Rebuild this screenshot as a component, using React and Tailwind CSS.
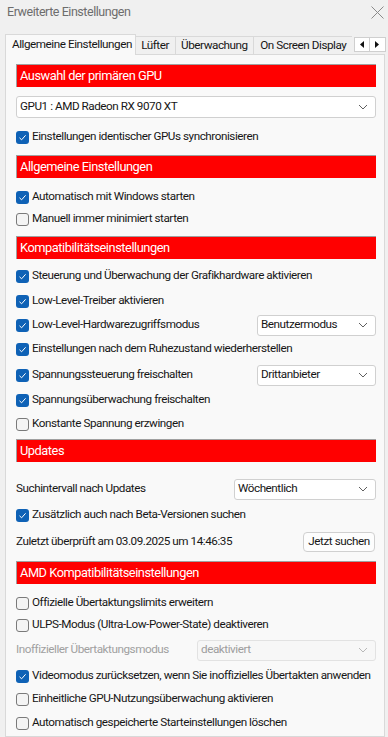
import React from "react";

const Check = ({ checked }) =>
  checked ? (
    <span className="w-[13px] h-[13px] rounded-[3px] bg-[#0f62b6] flex items-center justify-center shrink-0">
      <svg width="9" height="9" viewBox="0 0 9 9">
        <path d="M1.5 4.8 L3.6 6.8 L7.6 2.3" fill="none" stroke="white" strokeWidth="1" />
      </svg>
    </span>
  ) : (
    <span className="w-[13px] h-[13px] rounded-[3px] border border-[#7a7a7a] bg-[#f4f4f4] shrink-0" />
  );

const Chevron = ({ color = "#5f5f5f" }) => (
  <svg width="10" height="6" viewBox="0 0 10 6">
    <path d="M1 1 L5 5 L9 1" fill="none" stroke={color} strokeWidth="1" />
  </svg>
);

const Header = ({ title, className }) => (
  <div className={"h-[23px] bg-[#ff0000] border-t border-l border-[#a0a0a0] flex items-center pl-[3px] text-white text-[12.8px] " + className}>
    {title}
  </div>
);

const Row = ({ checked, label, className, children }) => (
  <div className={"h-[22px] flex items-center " + className}>
    <Check checked={checked} />
    <span className="ml-[3px] flex-1 whitespace-nowrap">{label}</span>
    {children}
  </div>
);

const Select = ({ value, className, disabled }) => (
  <div
    className={
      "h-[21px] rounded-[3px] border flex items-center justify-between pl-[3px] pr-[7px] " +
      (disabled ? "border-[#e2e2e2] bg-[#f7f7f7] text-[#9d9d9d] " : "border-[#d0d0d0] bg-white ") +
      className
    }
  >
    <span>{value}</span>
    <Chevron color={disabled ? "#b8b8b8" : "#5f5f5f"} />
  </div>
);

export default function App() {
  return (
    <div
      className="w-[388px] h-[737px] bg-[#f0f0f0] text-[11.7px] tracking-[-0.45px] text-[#161616] overflow-hidden flex flex-col"
      style={{ fontFamily: "Roboto, 'Liberation Sans', sans-serif" }}
    >
      {/* title bar */}
      <div className="h-[25px] flex items-center justify-between pl-[7px] pr-[3px]">
        <span className="text-[12.5px] text-[#6d6d6d]">Erweiterte Einstellungen</span>
        <svg width="13" height="13" viewBox="0 0 13 13" className="mr-[1px]">
          <path d="M0.5 0.5 L12.5 12.5 M12.5 0.5 L0.5 12.5" stroke="#8a8a8a" strokeWidth="1" />
        </svg>
      </div>

      {/* tabs */}
      <div className="h-[29px] flex items-end pl-[5px] pr-[2px] whitespace-nowrap">
        <div className="h-[21px] w-[131px] bg-[#f9f9f9] border-t border-l border-r border-[#d9d9d9] flex items-center pl-[6px] relative top-[1px] z-10">
          Allgemeine Einstellungen
        </div>
        <div className="h-[18px] w-[40px] border-t border-r border-[#d9d9d9] flex items-center justify-center">Lüfter</div>
        <div className="h-[18px] w-[79px] border-t border-r border-[#d9d9d9] flex items-center justify-center">Überwachung</div>
        <div className="h-[18px] w-[98px] border-t border-[#d9d9d9] flex items-center pl-[6px] overflow-hidden">
          On Screen Display
        </div>
        <div className="flex self-start mt-[12px] ml-[2px] border border-[#cfcfcf] bg-white h-[15px]">
          <div className="w-[15px] flex items-center justify-center border-r border-[#cfcfcf]">
            <svg width="4" height="7" viewBox="0 0 4 7"><path d="M4 0 L0 3.5 L4 7 Z" fill="#111" /></svg>
          </div>
          <div className="w-[15px] flex items-center justify-center">
            <svg width="4" height="7" viewBox="0 0 4 7"><path d="M0 0 L4 3.5 L0 7 Z" fill="#111" /></svg>
          </div>
        </div>
      </div>

      {/* panel */}
      <div className="flex-1 ml-[5px] mr-[3px] border border-[#d9d9d9] bg-[#f9f9f9] pl-[10px] pr-[8px] pt-[9px] flex flex-col">
        <Header title="Auswahl der primären GPU" className="" />
        <Select value="GPU1 : AMD Radeon RX 9070 XT" className="mt-[9px] h-[22px]" />
        <Row checked label="Einstellungen identischer GPUs synchronisieren" className="mt-[8px]" />

        <Header title="Allgemeine Einstellungen" className="mt-[7px]" />
        <Row checked label="Automatisch mit Windows starten" className="mt-[8px]" />
        <Row label="Manuell immer minimiert starten" className="" />

        <Header title="Kompatibilitätseinstellungen" className="mt-[6px]" />
        <Row checked label="Steuerung und Überwachung der Grafikhardware aktivieren" className="mt-[6px]" />
        <Row checked label="Low-Level-Treiber aktivieren" className="mt-[3px]" />
        <Row checked label="Low-Level-Hardwarezugriffsmodus" className="mt-[2px]">
          <Select value="Benutzermodus" className="w-[119px]" />
        </Row>
        <Row checked label="Einstellungen nach dem Ruhezustand wiederherstellen" className="mt-[2px]" />
        <Row checked label="Spannungssteuerung freischalten" className="mt-[4px]">
          <Select value="Drittanbieter" className="w-[119px]" />
        </Row>
        <Row checked label="Spannungsüberwachung freischalten" className="mt-[3px]" />
        <Row label="Konstante Spannung erzwingen" className="mt-[2px]" />

        <Header title="Updates" className="mt-[4px]" />
        <div className="h-[22px] flex items-center justify-between mt-[16px]">
          <span>Suchintervall nach Updates</span>
          <Select value="Wöchentlich" className="w-[142px]" />
        </div>
        <Row checked label="Zusätzlich auch nach Beta-Versionen suchen" className="mt-[4px]" />
        <div className="h-[22px] flex items-center justify-between mt-[5px]">
          <span>Zuletzt überprüft am 03.09.2025 um 14:46:35</span>
          <div className="h-[20px] w-[72px] mr-[1px] bg-[#fdfdfd] border border-[#d0d0d0] rounded-[4px] flex items-center justify-center">
            Jetzt suchen
          </div>
        </div>

        <Header title="AMD Kompatibilitätseinstellungen" className="mt-[8px]" />
        <Row label="Offizielle Übertaktungslimits erweitern" className="mt-[8px]" />
        <Row label="ULPS-Modus (Ultra-Low-Power-State) deaktiveren" className="" />
        <div className="h-[22px] flex items-center justify-between mt-[3px]">
          <span className="text-[#a0a0a0]">Inoffizieller Übertaktungsmodus</span>
          <Select value="deaktiviert" disabled className="w-[179px]" />
        </div>
        <Row checked label="Videomodus zurücksetzen, wenn Sie inoffizielles Übertakten anwenden" className="mt-[4px]" />
        <Row label="Einheitliche GPU-Nutzungsüberwachung aktivieren" className="mt-[1px]" />
        <Row label="Automatisch gespeicherte Starteinstellungen löschen" className="mt-[2px]" />
      </div>
    </div>
  );
}
